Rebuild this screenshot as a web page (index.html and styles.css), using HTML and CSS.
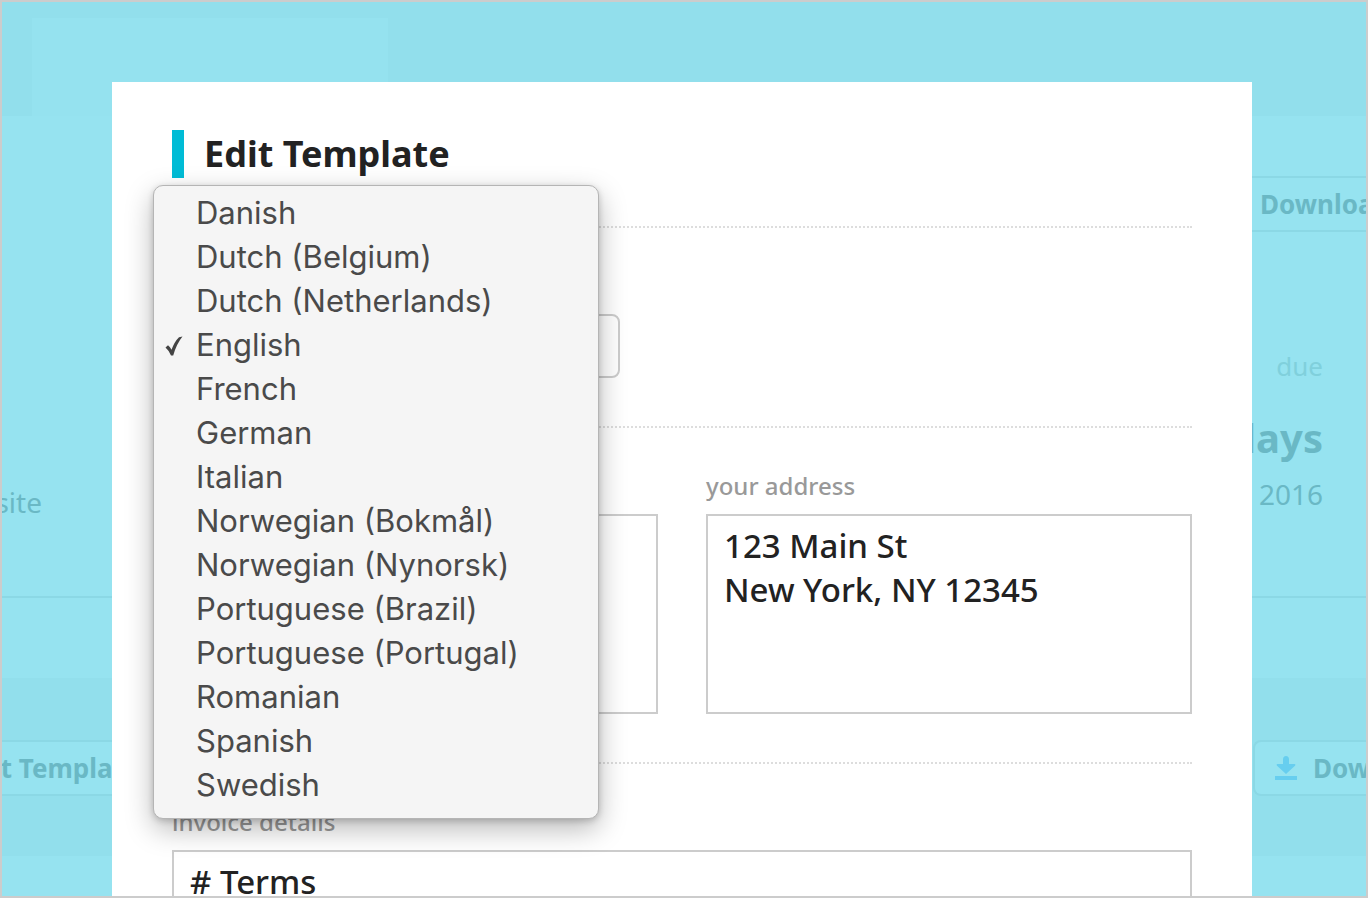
FILE: index.html
```html
<!DOCTYPE html>
<html lang="en">
<head>
<meta charset="utf-8">
<title>Edit Template</title>
<link rel="stylesheet" href="styles.css">
</head>
<body>
<div class="screen">
  <div class="page" aria-hidden="true">
    <header class="page-header"><div class="page-logo"></div><div class="page-nav"></div></header>
    <div class="page-actions">
      <button class="page-button page-button-flat" type="button" tabindex="-1">Download</button>
    </div>
    <div class="page-meta">
      <div class="client">website</div>
      <div class="due">
        <div class="due-label">due</div>
        <div class="due-days">days</div>
        <div class="due-date">2016</div>
      </div>
    </div>
    <div class="page-space"></div>
    <div class="page-band">
      <button class="page-button page-button-edit" type="button" tabindex="-1">Edit Template</button>
      <button class="page-button page-button-download" type="button" tabindex="-1">
        <svg class="download-icon" viewBox="0 0 22 26"><path d="M11 1c-2 0-3 1.500-3 3.500V9H2.500C1.500 9 1.400 10 2 10.700L11 19l9-8.300c.6-.7.500-1.700-.5-1.700H14V4.500C14 2.500 13 1 11 1zM0 21h22v4H0z"/></svg>
        Download
      </button>
    </div>
  </div>

  <main class="overlay">
    <form class="modal" role="dialog" aria-labelledby="modal-title">
      <h1 class="modal-title" id="modal-title">Edit Template</h1>
      <section class="section">
        <div class="field field-language">
          <label class="label" for="language">language</label>
          <select class="select" id="language"><option>English</option></select>
          <ul class="menu" role="listbox" aria-label="language">
            <li class="menu-item" role="option">Danish</li>
            <li class="menu-item" role="option">Dutch (Belgium)</li>
            <li class="menu-item" role="option">Dutch (Netherlands)</li>
            <li class="menu-item" role="option" aria-selected="true"><svg class="check" viewBox="0 0 18 20"><path d="M.5 11.500 3 9.300Q5.200 11 6.500 13.800 9.500 5.500 14 1.200L17.500.6Q11.500 8 8.200 19.500L6 19.500Q4 14.500.5 11.500z"/></svg>English</li>
            <li class="menu-item" role="option">French</li>
            <li class="menu-item" role="option">German</li>
            <li class="menu-item" role="option">Italian</li>
            <li class="menu-item" role="option">Norwegian (Bokmål)</li>
            <li class="menu-item" role="option">Norwegian (Nynorsk)</li>
            <li class="menu-item" role="option">Portuguese (Brazil)</li>
            <li class="menu-item" role="option">Portuguese (Portugal)</li>
            <li class="menu-item" role="option">Romanian</li>
            <li class="menu-item" role="option">Spanish</li>
            <li class="menu-item" role="option">Swedish</li>
          </ul>
        </div>
      </section>
      <section class="section section-split">
        <div class="field">
          <label class="label" for="name">your name</label>
          <textarea class="textarea" id="name"></textarea>
        </div>
        <div class="field">
          <label class="label" for="address">your address</label>
          <textarea class="textarea" id="address" spellcheck="false">123 Main St
New York, NY 12345</textarea>
        </div>
      </section>
      <section class="section">
        <div class="field">
          <label class="label" for="details">invoice details</label>
          <textarea class="textarea" id="details" spellcheck="false"># Terms</textarea>
        </div>
      </section>
    </form>
  </main>
</div>
</body>
</html>
```

FILE: styles.css
```css
* { box-sizing: border-box; }

body {
  margin: 0;
  color: #222;
  font-family: "Noto Sans", "Open Sans", sans-serif;
}

button, select, textarea { font: inherit; color: inherit; }

.screen {
  display: grid;
  grid-template: minmax(0, 1fr) / minmax(0, 1fr);
  height: 100vh;
  overflow: hidden;
  border: 2px solid #ccc;
  background: #96e3f0;
}

.page, .overlay { grid-area: 1 / 1; min-width: 0; }

/* Dimmed invoice page */
.page { color: #6ab8c5; overflow: hidden; }

.page-header {
  display: flex;
  height: 114px;
  padding-top: 16px;
  background: #92dfec;
}
.page-logo { width: 30px; }
.page-nav { width: 356px; background: #95e2ef; }

.page-actions {
  display: flex;
  justify-content: flex-end;
  padding: 60px 0;
}

.page-button {
  height: 56px;
  padding: 0;
  border: 2px solid #8bd8e5;
  background: #96e3f0;
  font-size: 26px;
  font-weight: 700;
  white-space: nowrap;
}
.page-button-flat {
  width: 118px;
  border-width: 2px 0;
  padding-left: 12px;
  text-align: left;
  overflow: hidden;
}

.page-meta {
  display: flex;
  justify-content: space-between;
  align-items: flex-end;
  padding: 52px 43px 80px 0;
  border-bottom: 2px solid #8bd8e5;
  font-size: 28px;
  line-height: 44px;
}
.client {
  display: flex;
  justify-content: flex-end;
  width: 40px;
  margin-bottom: -8px;
  overflow: hidden;
}
.due { text-align: right; }
.due-label { color: #80d0dc; font-size: 26px; }
.due-days { padding: 28px 0 12px; font-size: 40px; font-weight: 700; }

.page-space { height: 80px; }

.page-band {
  display: flex;
  justify-content: space-between;
  padding: 62px 0 60px;
  background: #92dfec;
}
.page-button-edit {
  border-width: 2px 0;
  margin-left: -40px;
}
.page-button-download {
  display: flex;
  align-items: center;
  gap: 16px;
  width: 113px;
  padding-left: 20px;
  border-right: 0;
  border-radius: 8px 0 0 8px;
  overflow: hidden;
}
.download-icon { flex: none; width: 22px; height: 26px; fill: #67ceef; }

/* Dialog */
.overlay { padding: 80px 114px 0 110px; }

.modal {
  min-height: 100%;
  padding: 48px 60px;
  background: #fff;
}

.modal-title {
  margin: 0 0 48px;
  padding-left: 20px;
  border-left: 12px solid #00bcd6;
  font-size: 36px;
  line-height: 48px;
}

.section {
  padding: 40px 0 48px;
  border-top: 2px dotted #ddd;
}
.section-split {
  display: grid;
  grid-template-columns: 1fr 1fr;
  gap: 48px;
}

.field { position: relative; display: flex; flex-direction: column; }

.label {
  margin-bottom: 10px;
  color: #999;
  font-size: 24px;
  font-weight: 500;
  line-height: 36px;
}

.select {
  width: 448px;
  height: 64px;
  padding: 0 16px;
  border: 2px solid #ccc;
  border-radius: 8px;
  background: #fff;
  font-size: 32px;
  appearance: none;
}

.textarea {
  height: 200px;
  padding: 8px 16px;
  border: 2px solid #ccc;
  background: #fff;
  font-size: 33px;
  font-weight: 500;
  line-height: 44px;
  resize: none;
  overflow: hidden;
}

.menu {
  position: absolute;
  z-index: 1;
  top: -83px;
  left: -19px;
  width: 446px;
  margin: 0;
  padding: 5px 0 11px;
  border: 1px solid #b5b5b5;
  border-radius: 10px;
  background: #f5f5f5;
  box-shadow: 0 10px 28px rgba(0, 0, 0, .28), 0 2px 6px rgba(0, 0, 0, .18);
  color: #4a4a4a;
  font-family: Inter, Roboto, sans-serif;
  font-size: 31px;
  line-height: 44px;
  list-style: none;
}
.menu-item { position: relative; padding-left: 42px; white-space: nowrap; }

.check {
  position: absolute;
  top: 13px;
  left: 11px;
  width: 18px;
  height: 20px;
  fill: #444;
}
```
